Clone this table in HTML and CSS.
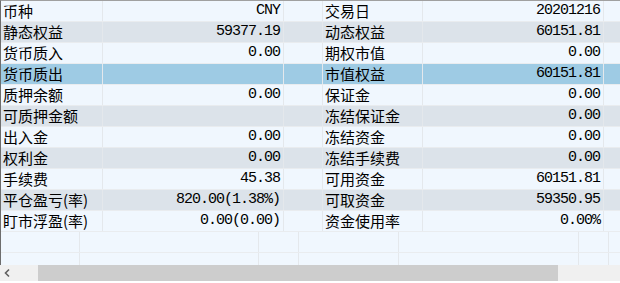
FILE: index.html
```html
<!DOCTYPE html>
<html>
<head>
<meta charset="utf-8">
<link rel="stylesheet" href="styles.css">
</head>
<body>
<div class="frame">
  <div class="table">
    <div class="row light"><div class="c lab">币种</div><div class="c val">CNY</div><div class="c gap"></div><div class="c lab">交易日</div><div class="c val">20201216</div><div class="c end"></div></div>
    <div class="row grey"><div class="c lab">静态权益</div><div class="c val">59377.19</div><div class="c gap"></div><div class="c lab">动态权益</div><div class="c val">60151.81</div><div class="c end"></div></div>
    <div class="row light"><div class="c lab">货币质入</div><div class="c val">0.00</div><div class="c gap"></div><div class="c lab">期权市值</div><div class="c val">0.00</div><div class="c end"></div></div>
    <div class="row sel"><div class="c lab">货币质出</div><div class="c val"></div><div class="c gap"></div><div class="c lab">市值权益</div><div class="c val">60151.81</div><div class="c end"></div></div>
    <div class="row light"><div class="c lab">质押余额</div><div class="c val">0.00</div><div class="c gap"></div><div class="c lab">保证金</div><div class="c val">0.00</div><div class="c end"></div></div>
    <div class="row grey"><div class="c lab">可质押金额</div><div class="c val"></div><div class="c gap"></div><div class="c lab">冻结保证金</div><div class="c val">0.00</div><div class="c end"></div></div>
    <div class="row light"><div class="c lab">出入金</div><div class="c val">0.00</div><div class="c gap"></div><div class="c lab">冻结资金</div><div class="c val">0.00</div><div class="c end"></div></div>
    <div class="row grey"><div class="c lab">权利金</div><div class="c val">0.00</div><div class="c gap"></div><div class="c lab">冻结手续费</div><div class="c val">0.00</div><div class="c end"></div></div>
    <div class="row light"><div class="c lab">手续费</div><div class="c val">45.38</div><div class="c gap"></div><div class="c lab">可用资金</div><div class="c val">60151.81</div><div class="c end"></div></div>
    <div class="row grey"><div class="c lab">平仓盈亏(率)</div><div class="c val">820.00(1.38%)</div><div class="c gap"></div><div class="c lab">可取资金</div><div class="c val">59350.95</div><div class="c end"></div></div>
    <div class="row light"><div class="c lab">盯市浮盈(率)</div><div class="c val">0.00(0.00)</div><div class="c gap"></div><div class="c lab">资金使用率</div><div class="c val">0.00%</div><div class="c end"></div></div>
    <div class="erow"><div class="c"></div><div class="c"></div><div class="c"></div><div class="c"></div><div class="c"></div><div class="c"></div><div class="c end"></div></div>
    <div class="erow short"><div class="c"></div><div class="c"></div><div class="c"></div><div class="c"></div><div class="c"></div><div class="c"></div><div class="c end"></div></div>
  </div>
  <div class="hscroll">
    <div class="arrow"><svg width="17" height="16" viewBox="0 0 17 16"><path d="M9 4.5 L5.5 8 L9 11.5" fill="none" stroke="#606060" stroke-width="1.6"/></svg></div>
    <div class="thumb"></div>
  </div>
</div>
</body>
</html>
```
FILE: styles.css
```css
html, body {
  margin: 0;
  padding: 0;
  background: #ffffff;
}
.frame {
  width: 620px;
  height: 283px;
  overflow: hidden;
}
.table {
  border-top: 1px solid #a0a0a0;
  border-left: 1px solid #6d6d6d;
  background: #f0f7fe;
}
.row {
  display: grid;
  grid-template-columns: 102px 181px 39px 100px 181px 1fr;
  height: 21px;
  box-sizing: border-box;
  border-bottom: 1px solid #e9ecef;
}
.row.light { background: #f0f7fe; }
.row.grey { background: #dce3ea; }
.row.sel { background: #9ecbe4; }
.c {
  box-sizing: border-box;
  border-right: 1px solid #e4e8ec;
  height: 20px;
  line-height: 20px;
  white-space: nowrap;
  color: #000;
}
.c.end { border-right: none; }
.lab {
  font-family: "Noto Sans CJK SC", "Noto Sans", sans-serif;
  font-size: 15px;
  padding-left: 2px;
}
.val {
  font-family: "Liberation Mono", "DejaVu Sans Mono", monospace;
  font-size: 15px;
  letter-spacing: -1px;
  text-align: right;
  padding-right: 3px;
}
.erow {
  display: grid;
  grid-template-columns: 79px 179px 40px 100px 180px 30px 1fr;
  height: 21px;
  box-sizing: border-box;
  border-bottom: 1px solid #e9ecef;
  background: #f0f7fe;
}
.erow.short {
  height: 12px;
  border-bottom: none;
}
.erow.short .c { height: 12px; }
.hscroll {
  display: flex;
  height: 16px;
  background: #f0f0f0;
}
.arrow {
  width: 38px;
  height: 16px;
}
.arrow svg { display: block; }
.thumb {
  width: 520px;
  height: 16px;
  background: #cdcdcd;
}
```
